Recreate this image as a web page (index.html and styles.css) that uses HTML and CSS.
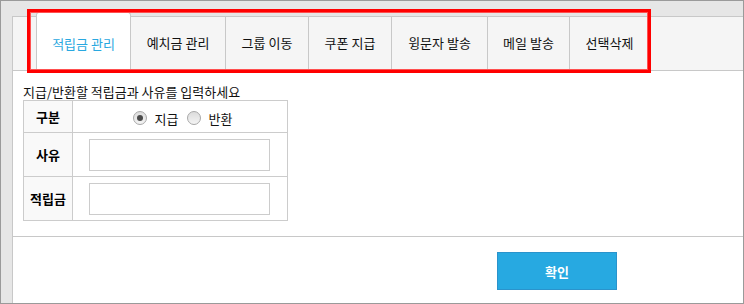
FILE: index.html
```html
<html>
  <head>
    <title>적립금 관리</title>
    <meta charset="utf-8" />
    <meta name="viewport" content="width=device-width, initial-scale=1">
    <link rel="stylesheet" href="styles.css">
  </head>
  <body>
    <div class="frame">
      <div class="panel">
        <div class="tabs">
          <div class="tab active">적립금 관리</div>
          <div class="tab">예치금 관리</div>
          <div class="tab">그룹 이동</div>
          <div class="tab">쿠폰 지급</div>
          <div class="tab">윙문자 발송</div>
          <div class="tab">메일 발송</div>
          <div class="tab">선택삭제</div>
        </div>

        <div class="content">
          <p class="guide">지급/반환할 적립금과 사유를 입력하세요</p>
          <table class="form-table">
            <tr class="row-type">
              <th>구분</th>
              <td>
                <div class="radios">
                  <span class="radio checked"></span>
                  <span class="radio-label">지급</span>
                  <span class="radio"></span>
                  <span class="radio-label">반환</span>
                </div>
              </td>
            </tr>
            <tr>
              <th>사유</th>
              <td><input type="text" class="field" /></td>
            </tr>
            <tr>
              <th>적립금</th>
              <td><input type="text" class="field" /></td>
            </tr>
          </table>
        </div>

        <div class="footer">
          <button class="btn-ok">확인</button>
        </div>
      </div>

      <div class="highlight"></div>
    </div>
  </body>
</html>
```

FILE: styles.css
```css
*{
  box-sizing: border-box;
}

body{
  margin: 0;
  padding: 0;
  font-family: "Noto Sans CJK KR", "DejaVu Sans", sans-serif;
  font-size: 13px;
  color: #111;
}

table{
  font-size: 13px;
}

.frame{
  position: relative;
  width: 744px;
  height: 304px;
  border: 1px solid #9a9a9a;
  background-color: #e6e6e6;
  padding: 15px 0 0 11px;
}

.panel{
  height: 100%;
  background-color: #fff;
  border-left: 1px solid #c8c8c8;
  border-top: 1px solid #c8c8c8;
}

.tabs{
  display: flex;
  align-items: flex-end;
  height: 54px;
  padding-left: 23px;
  background-color: #f5f5f5;
  border-bottom: 1px solid #c8c8c8;
}

.tab{
  height: 53px;
  line-height: 52px;
  text-align: center;
  border-right: 1px solid #c8c8c8;
  color: #111;
  white-space: nowrap;
}

.tab:nth-child(1){ width: 95px; }
.tab:nth-child(2){ width: 95px; }
.tab:nth-child(3){ width: 83px; }
.tab:nth-child(4){ width: 83px; }
.tab:nth-child(5){ width: 96px; }
.tab:nth-child(6){ width: 82px; }
.tab:nth-child(7){ width: 80px; }

.tab.active{
  height: 59px;
  line-height: 61px;
  margin-bottom: -1px;
  background-color: #fff;
  color: #29a8e0;
  border: 1px solid #c8c8c8;
  border-bottom: none;
  border-radius: 3px 3px 0 0;
}

.content{
  padding: 13px 0 15px 10px;
  border-bottom: 1px solid #c8c8c8;
}

.guide{
  margin: 0;
  height: 16px;
  line-height: 16px;
}

.form-table{
  border-collapse: collapse;
  width: 265px;
}

.form-table th,
.form-table td{
  border: 1px solid #cccccc;
  padding: 0;
  height: 44px;
}

.form-table .row-type th,
.form-table .row-type td{
  height: 32px;
}

.form-table th{
  width: 49px;
  background-color: #f9f9f9;
  font-weight: bold;
  color: #000;
}

.form-table td{
  text-align: center;
}

.radios{
  display: flex;
  align-items: center;
  justify-content: center;
  gap: 8px;
  padding-left: 5px;
  padding-top: 3px;
}

.radio{
  width: 14px;
  height: 14px;
  border-radius: 50%;
  border: 1px solid #a9a9a9;
  background: linear-gradient(#dcdcdc, #f4f4f4);
  display: flex;
  align-items: center;
  justify-content: center;
}

.radio.checked::after{
  content: "";
  width: 6px;
  height: 6px;
  border-radius: 50%;
  background-color: #4a4a4a;
}

.field{
  display: block;
  margin: 0 auto;
  width: 181px;
  height: 32px;
  border: 1px solid #cccccc;
  outline: none;
  position: relative;
  left: -1px;
}

.footer{
  padding: 15px 0 0 484px;
}

.btn-ok{
  width: 120px;
  height: 38px;
  border: 1px solid #2a93cc;
  background-color: #27a9e1;
  color: #fff;
  font-family: "Noto Sans CJK KR", "DejaVu Sans", sans-serif;
  font-size: 13px;
  font-weight: bold;
}

.highlight{
  position: absolute;
  left: 26px;
  top: 8px;
  width: 624px;
  height: 64px;
  border: 3px solid #ff0000;
  box-shadow: inset 0 0 0 1px #ff5050;
}
```
